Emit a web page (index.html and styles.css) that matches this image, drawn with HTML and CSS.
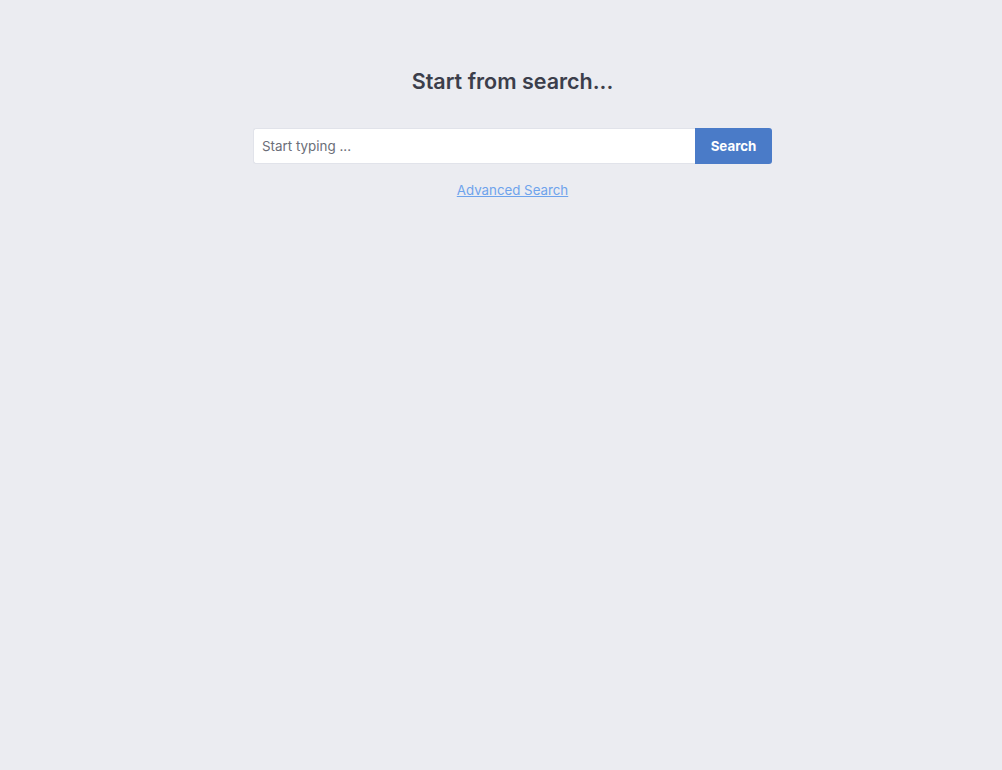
FILE: index.html
```html
<!DOCTYPE html>
<html lang="en">
<head>
<meta charset="utf-8">
<title>Search</title>
<link rel="stylesheet" href="styles.css">
</head>
<body>
<main class="page">
  <h1 class="title">Start from search...</h1>
  <form class="search">
    <input class="search-input" type="text" placeholder="Start typing ...">
    <button class="search-btn" type="button">Search</button>
  </form>
  <a class="adv-link" href="#">Advanced Search</a>
</main>
</body>
</html>
```

FILE: styles.css
```css
html, body {
  margin: 0;
  padding: 0;
  background: #ebecf1;
  font-family: "Inter", "Open Sans", sans-serif;
}
.page {
  display: flex;
  flex-direction: column;
  align-items: center;
  padding-top: 67px;
  padding-left: 23px;
}
.title {
  margin: 0;
  font-size: 21.5px;
  font-weight: 600;
  color: #3b3e4b;
  line-height: 28px;
  letter-spacing: 0;
}
.search {
  display: flex;
  margin-top: 33px;
  width: 519px;
  height: 36px;
}
.search-input {
  flex: 1;
  box-sizing: border-box;
  height: 36px;
  border: 1px solid #e1e3ea;
  border-right: none;
  border-radius: 3px 0 0 3px;
  padding: 0 8px;
  font-family: inherit;
  font-size: 13.4px;
  color: #333;
  background: #fff;
  outline: none;
}
.search-input::placeholder {
  color: #6b6e78;
}
.search-btn {
  width: 77px;
  height: 36px;
  border: none;
  border-radius: 0 3px 3px 0;
  background: #4a7bc8;
  color: #fff;
  font-family: inherit;
  font-size: 13.3px;
  font-weight: 700;
  cursor: pointer;
}
.adv-link {
  margin-top: 18px;
  font-size: 13.3px;
  color: #6ea3ec;
  text-decoration: underline;
}
```
